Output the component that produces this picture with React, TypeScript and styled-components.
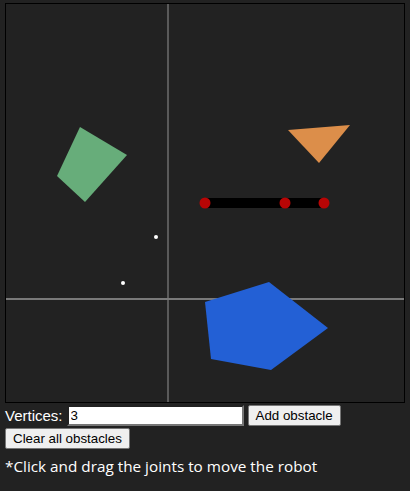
import { FC } from "react";
import styled, { createGlobalStyle } from "styled-components";

interface IObstacle {
  points: string;
  color: string;
}

const obstacles: IObstacle[] = [
  { points: "80,127 127,155 85,202 57,176", color: "#67ad7a" },
  { points: "288,130 350,125 319,163", color: "#dc8e4a" },
  { points: "269,282 328,328 271,370 211,359 205,302", color: "#2360d5" },
];

const joints = [205, 285, 324];
const samples = [
  { x: 156, y: 237 },
  { x: 123, y: 283 },
];

const GlobalStyle = createGlobalStyle`
  body {
    margin: 0;
    background: #222222;
    color: #ffffff;
    font-family: "Liberation Sans", Arial, sans-serif;
  }
`;

const App: FC = () => {
  return (
    <Page>
      <GlobalStyle />
      <Board viewBox="0 0 398 398" width={398} height={398}>
        {/* axes */}
        <line x1={162} y1={0} x2={162} y2={398} stroke="#5a5a5a" strokeWidth={2} />
        <line x1={0} y1={295} x2={398} y2={295} stroke="#7a7a7a" strokeWidth={2} />
        <g transform="translate(-6,-4)">
          {obstacles.map((o) => (
            <polygon key={o.points} points={o.points} fill={o.color} />
          ))}
          {samples.map((s) => (
            <circle key={s.x} cx={s.x} cy={s.y} r={2} fill="#ffffff" />
          ))}
          <line x1={205} y1={203} x2={324} y2={203} stroke="#000000" strokeWidth={10} />
          {joints.map((x) => (
            <circle key={x} cx={x} cy={203} r={5.5} fill="#b80505" />
          ))}
        </g>
      </Board>
      <Controls>
        <Row>
          <Label>Vertices:</Label>
          <Input defaultValue="3" />
          <Button>Add obstacle</Button>
        </Row>
        <Row>
          <Button>Clear all obstacles</Button>
        </Row>
      </Controls>
      <Hint>*Click and drag the joints to move the robot</Hint>
    </Page>
  );
};

export default App;

const Page = styled.div`
  padding: 3px 5px;
`;

const Board = styled.svg`
  display: block;
  border: 1px solid #000000;
  background: #222222;
`;

const Controls = styled.div`
  display: flex;
  flex-direction: column;
  gap: 2px;
  margin-top: 2px;
`;

const Row = styled.div`
  display: flex;
  align-items: center;
  gap: 4px;
`;

const Label = styled.span`
  font-size: 15px;
  line-height: 20px;
`;

const Input = styled.input`
  box-sizing: border-box;
  width: 177px;
  height: 21px;
  padding: 1px 2px;
  border: 2px inset #767676;
  font-family: "Liberation Sans", Arial, sans-serif;
  font-size: 13.33px;
  background: #ffffff;
  color: #000000;
`;

const Button = styled.button`
  box-sizing: border-box;
  height: 21px;
  padding: 1px 7px;
  border: 1px solid #767676;
  border-radius: 2px;
  background: #efefef;
  color: #000000;
  font-family: "Liberation Sans", Arial, sans-serif;
  font-size: 13.33px;
`;

const Hint = styled.p`
  margin: 7px 0 0;
  font-family: "Open Sans", "Noto Sans", sans-serif;
  font-size: 15.3px;
  line-height: 20px;
`;
